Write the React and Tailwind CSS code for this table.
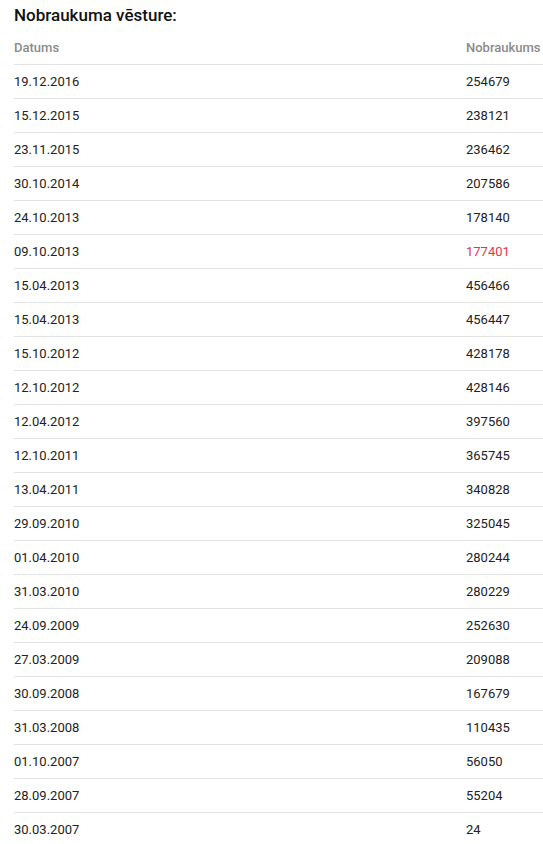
import React from "react";

const rows = [
  ["19.12.2016", "254679"],
  ["15.12.2015", "238121"],
  ["23.11.2015", "236462"],
  ["30.10.2014", "207586"],
  ["24.10.2013", "178140"],
  ["09.10.2013", "177401", true],
  ["15.04.2013", "456466"],
  ["15.04.2013", "456447"],
  ["15.10.2012", "428178"],
  ["12.10.2012", "428146"],
  ["12.04.2012", "397560"],
  ["12.10.2011", "365745"],
  ["13.04.2011", "340828"],
  ["29.09.2010", "325045"],
  ["01.04.2010", "280244"],
  ["31.03.2010", "280229"],
  ["24.09.2009", "252630"],
  ["27.03.2009", "209088"],
  ["30.09.2008", "167679"],
  ["31.03.2008", "110435"],
  ["01.10.2007", "56050"],
  ["28.09.2007", "55204"],
  ["30.03.2007", "24"],
];

export default function App() {
  return (
    <div className="bg-white pl-[14px] font-['Roboto',sans-serif] text-[#222]">
      <div className="h-[31px] flex items-center text-[17px] font-medium text-[#111]">Nobraukuma vēsture:</div>
      <div className="flex h-[34px] items-center border-b border-[#e2e2e2] text-[13px] font-medium text-[#8a8a8a]">
        <div className="flex-1">Datums</div>
        <div className="w-[77px]">Nobraukums</div>
      </div>
      {rows.map(([d, v, red], i) => (
        <div key={i} className="flex h-[34px] items-center border-b border-[#e2e2e2] text-[13px]">
          <div className="flex-1">{d}</div>
          <div className={red ? "w-[77px] text-[#e8334f]" : "w-[77px]"}>{v}</div>
        </div>
      ))}
    </div>
  );
}
